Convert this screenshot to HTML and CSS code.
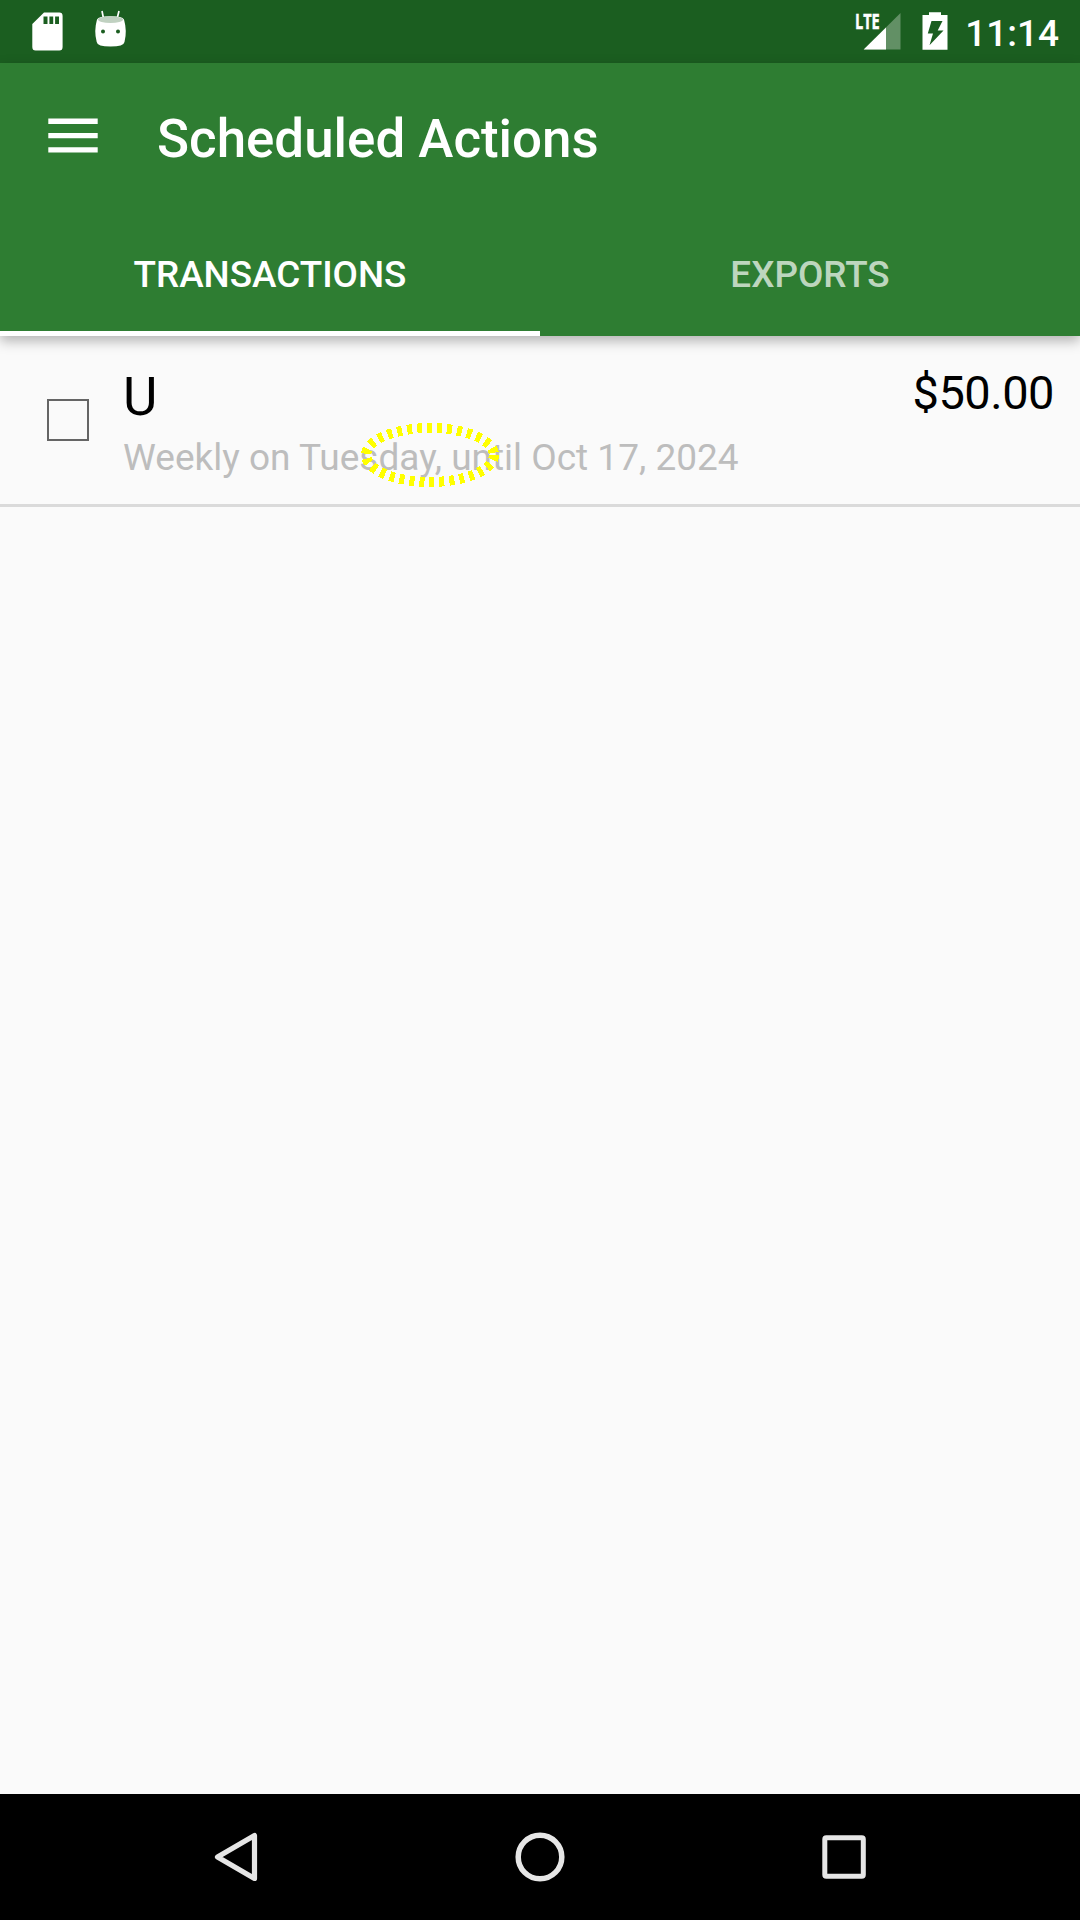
FILE: index.html
```html
<!DOCTYPE html>
<html lang="en">
<head>
<meta charset="utf-8">
<title>Scheduled Actions</title>
<link rel="stylesheet" href="styles.css">
</head>
<body>
<div class="screen">
  <div class="status-bar">
    <svg class="notifications" width="140" height="63" viewBox="0 0 140 63">
      <path fill="#fff" fill-rule="evenodd" d="M44 12.6H59.300Q62.600 12.600 62.600 16V47Q62.600 50.500 59.300 50.500H35.600Q32.300 50.500 32.300 47V24ZM43.500 16.500V24H47.500V16.500ZM49.400 16.500V24H53.200V16.500ZM55.100 16.500V24H59V16.500Z"/>
      <path fill="none" stroke="#fff" stroke-width="1.700" d="M102 11L103.600 19M119 11L117 19"/>
      <path fill="#fff" fill-rule="evenodd" d="M97 19.500Q98.500 16.300 110.500 16.300T124 19.500Q127.300 31 124.500 42Q123.800 46.600 110.500 46.600T96.700 42Q93.700 31 97 19.500ZM101 31.500a2 2 0 1 0 4 0a2 2 0 1 0-4 0M116 31.500a2 2 0 1 0 4 0a2 2 0 1 0-4 0"/>
      <ellipse cx="110.500" cy="19.600" rx="12.600" ry="3.400" fill="#c0d1c1"/>
    </svg>
    <div class="status-right">
      <div class="signal">
        <svg width="48" height="63" viewBox="0 0 48 63">
          <path fill="#629065" d="M8.700 49.500L45.500 13V49.500Z"/>
          <path fill="#fff" d="M8.700 49.500L31 27.400V49.500Z"/>
        </svg>
        <span class="network">LTE</span>
      </div>
      <svg class="battery" width="26" height="63" viewBox="0 0 26 63">
        <path fill="#fff" fill-rule="evenodd" d="M7 12.300H19V15H25.500V49.800H.5V15H7ZM9.500 21H20.500L15.700 30.500H21.500L7.500 45.300L11 33.400H5.800Z"/>
      </svg>
      <span class="clock">11:14</span>
    </div>
  </div>
  <header class="app-bar">
    <div class="toolbar">
      <svg class="menu" width="50" height="36" viewBox="0 0 50 36"><path fill="#fff" d="M.3.500H49.700V6H.3ZM.3 15H49.700V20.300H.3ZM.3 29.200H49.700V34.600H.3Z"/></svg>
      <h1 class="title">Scheduled Actions</h1>
    </div>
    <nav class="tabs">
      <div class="tab tab-active">TRANSACTIONS</div>
      <div class="tab">EXPORTS</div>
    </nav>
  </header>
  <main class="list">
    <div class="row">
      <div class="checkbox"></div>
      <div class="details">
        <div class="name">U</div>
        <div class="schedule">Weekly on Tuesday, until Oct 17, 2024</div>
      </div>
      <div class="amount">$50.00</div>
      <svg class="highlight" width="140" height="66" viewBox="0 0 140 66">
        <ellipse cx="70" cy="33" rx="64" ry="27" fill="none" stroke="#ff0" stroke-width="10" stroke-dasharray="5 5" shape-rendering="crispEdges"/>
      </svg>
    </div>
  </main>
  <div class="nav-bar">
    <svg width="48" height="52" viewBox="0 0 48 52"><path fill="none" stroke="#e6e6e6" stroke-width="5.200" stroke-linejoin="round" d="M42.500 4.500V47.500L5.500 26Z"/></svg>
    <svg width="52" height="52" viewBox="0 0 52 52"><circle cx="26" cy="26" r="21.800" fill="none" stroke="#e6e6e6" stroke-width="5.500"/></svg>
    <svg width="48" height="52" viewBox="0 0 48 52"><rect x="4.800" y="6.800" width="38.500" height="38.500" rx="1.500" fill="none" stroke="#e6e6e6" stroke-width="5"/></svg>
  </div>
</div>
</body>
</html>
```

FILE: styles.css
```css
* {
  box-sizing: border-box;
}

body {
  margin: 0;
  font-family: Roboto, sans-serif;
}

.screen {
  width: 1080px;
  height: 1920px;
  display: flex;
  flex-direction: column;
  background: #fafafa;
  overflow: hidden;
}

.status-bar {
  height: 63px;
  flex: none;
  display: flex;
  justify-content: space-between;
  background: #1b5e20;
}

.status-right {
  display: flex;
  padding-right: 21px;
}

.signal {
  position: relative;
  width: 48px;
  margin-right: 19px;
}

.network {
  position: absolute;
  left: 0;
  top: 8px;
  color: #fff;
  font: 700 22px/24px "Open Sans", sans-serif;
  transform: scaleX(0.660);
  transform-origin: left;
  -webkit-text-stroke: 0.500px #fff;
}

.battery {
  margin-right: 17px;
}

.clock {
  color: #fff;
  font-size: 37px;
  font-weight: 500;
  line-height: 43px;
  padding-top: 12px;
}

.app-bar {
  flex: none;
  height: 273px;
  background: #2e7d32;
  box-shadow: 0 5px 12px rgba(0, 0, 0, 0.290);
  color: #fff;
}

.toolbar {
  height: 147px;
  display: flex;
  align-items: flex-start;
  padding-left: 48px;
}

.menu {
  margin-top: 55px;
}

.title {
  margin: 45px 0 0 59px;
  font-size: 52.900px;
  font-weight: 500;
  line-height: 62px;
}

.tabs {
  height: 126px;
  display: grid;
  grid-template-columns: 1fr 1fr;
}

.tab {
  padding-top: 43px;
  font-size: 36.850px;
  font-weight: 500;
  line-height: 43px;
  text-align: center;
  color: rgba(255, 255, 255, 0.700);
}

.tab-active {
  color: #fff;
  border-bottom: 5px solid #fff;
}

.list {
  flex: 1;
}

.row {
  position: relative;
  height: 171px;
  display: flex;
  align-items: flex-start;
  padding: 0 26px 0 47px;
  border-bottom: 3px solid #dadada;
}

.checkbox {
  width: 42px;
  height: 42px;
  margin: 63px 34px 0 0;
  border: 2px solid #656565;
}

.details {
  flex: 1;
  padding-top: 30px;
}

.name {
  font-size: 53px;
  line-height: 62px;
}

.schedule {
  font-size: 37px;
  line-height: 43px;
  margin-top: 8px;
  color: #bdbdbd;
}

.amount {
  font-size: 47px;
  line-height: 56px;
  letter-spacing: -0.500px;
  padding-top: 29px;
}

.highlight {
  position: absolute;
  left: 360px;
  top: 86px;
}

.nav-bar {
  flex: none;
  height: 126px;
  display: flex;
  align-items: center;
  justify-content: space-between;
  padding: 0 212px;
  background: #000;
}
```
